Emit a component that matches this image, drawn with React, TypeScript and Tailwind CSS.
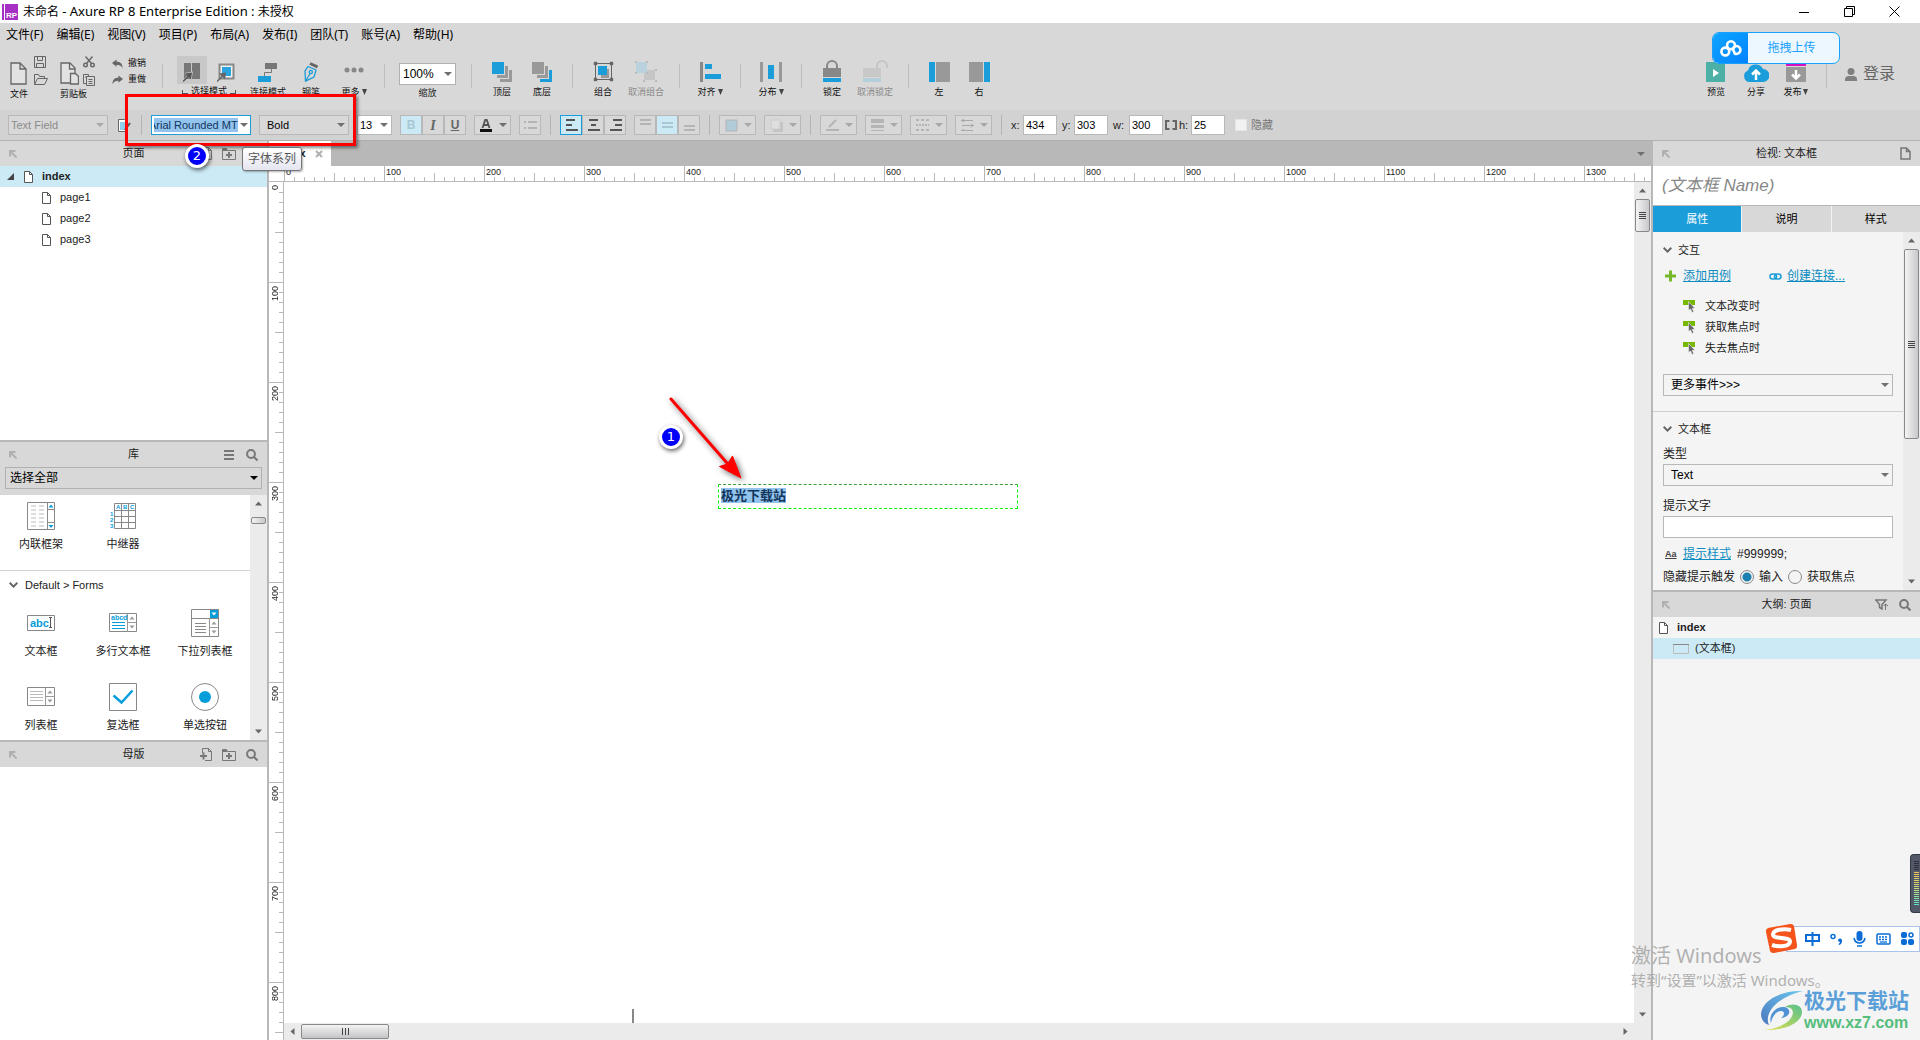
import React, { useEffect, useRef, useState } from "react";

const menus = ["文件(F)", "编辑(E)", "视图(V)", "项目(P)", "布局(A)", "发布(I)", "团队(T)", "账号(A)", "帮助(H)"];
const pages = ["page1", "page2", "page3"];
const events = ["文本改变时", "获取焦点时", "失去焦点时"];

/* ---------- shared bits ---------- */

function Sep() {
  return <div className="w-px h-6 mx-[10px] mt-2 shrink-0 bg-[#bcbcbc]" />;
}

function FormatSep() {
  return <div className="w-px h-5 mx-px shrink-0 bg-[#b4b4b4]" />;
}

function Caret({ className = "text-[#707070]" }: { className?: string }) {
  return (
    <svg width="8" height="4" viewBox="0 0 8 4" className={`shrink-0 ${className}`}>
      <path d="M0 0h8L4 4z" fill="currentColor" />
    </svg>
  );
}

type PickProps = {
  label: string;
  options: string[];
  className: string;
  caret?: string;
};

function Pick({ label, options, className, caret }: PickProps) {
  return (
    <div className={`relative flex items-center border ${className}`}>
      <select
        aria-label={label}
        className="appearance-none w-full h-full pr-3 bg-transparent outline-none"
      >
        {options.map((option) => (
          <option key={option}>{option}</option>
        ))}
      </select>
      <div className="absolute right-[3px] pointer-events-none">
        <Caret className={caret} />
      </div>
    </div>
  );
}

type ToolProps = {
  label: string;
  menu?: boolean;
  disabled?: boolean;
  wide?: boolean;
  children: React.ReactNode;
};

function Tool({ label, menu, disabled, wide, children }: ToolProps) {
  return (
    <button
      disabled={disabled}
      className={`flex flex-col items-center shrink-0 text-[9px] ${wide ? "w-[46px]" : "w-10"} ${
        disabled ? "text-[#8a8a8a]" : "text-[#111]"
      }`}
    >
      <span className="flex items-end justify-center h-7 pb-[2px]">{children}</span>
      <span className="flex items-center gap-[2px] h-4 whitespace-nowrap leading-4">
        {label}
        {menu && (
          <svg width="5" height="6" viewBox="0 0 5 6">
            <path d="M0 0h5L2.500 6z" fill="#444" />
          </svg>
        )}
      </span>
    </button>
  );
}

function DocIcon({ w = 9, h = 12 }: { w?: number; h?: number }) {
  return (
    <svg width={w} height={h} viewBox="0 0 9 12" fill="#fff" stroke="#555" className="shrink-0">
      <path d="M.5.5h5l3 3v8h-8z" />
      <path d="M5.500.5v3h3" fill="none" />
    </svg>
  );
}

function SearchIcon() {
  return (
    <svg width="12" height="12" viewBox="0 0 12 12" fill="none" stroke="#777" strokeWidth="2">
      <circle cx="5" cy="5" r="3.900" />
      <path d="M8 8l3.500 3.500" />
    </svg>
  );
}

function AddPageIcon() {
  return (
    <svg width="12" height="13" viewBox="0 0 12 13" fill="none" stroke="#777">
      <path d="M2.500 5V.5h6l3 3v9H5M8.500.5v3h3" />
      <path d="M0 8h7M3.500 4.500v7" strokeWidth="2" />
    </svg>
  );
}

function AddFolderIcon() {
  return (
    <svg width="14" height="12" viewBox="0 0 14 12" fill="none" stroke="#777">
      <path d="M.5 11.500V.5h4l1 2h8v9z" />
      <path d="M1 1h4v2H1z" fill="#777" stroke="none" />
      <path d="M4 7h6M7 4v6" strokeWidth="2" />
    </svg>
  );
}

function Chevron() {
  return (
    <svg width="9" height="6" viewBox="0 0 9 6" fill="none" stroke="#666" strokeWidth="2" className="shrink-0">
      <path d="M.7.8l3.800 3.800L8.300.8" />
    </svg>
  );
}

function PanelHeader({ title, children }: { title: string; children?: React.ReactNode }) {
  return (
    <div className="grid grid-cols-[1fr_auto_1fr] items-center h-[25px] px-[9px] shrink-0 bg-[#d8d8d8]">
      <svg width="8" height="8" viewBox="0 0 8 8" fill="none" stroke="#b0b0b0" strokeWidth="2">
        <path d="M1 6.500V1h5.500M1 1l6.500 6.500" />
      </svg>
      <h2 className="text-[11px]">{title}</h2>
      <div className="flex items-center justify-end gap-[10px]">{children}</div>
    </div>
  );
}

function ScrollArrow({ dir }: { dir: "up" | "down" | "left" | "right" }) {
  const paths = {
    up: "M0 5.500L3.500 1.500 7 5.500z",
    down: "M0 1.500h7L3.500 5.500z",
    left: "M5.500 0v7L1.500 3.500z",
    right: "M1.500 0v7l4-3.500z",
  };
  return (
    <span className="flex items-center justify-center w-[17px] h-[17px] shrink-0">
      <svg width="7" height="7" viewBox="0 0 7 7">
        <path d={paths[dir]} fill="#666" />
      </svg>
    </span>
  );
}

function VScroll({ thumb, grip = true }: { thumb: string; grip?: boolean }) {
  return (
    <div className="flex flex-col items-center w-[17px] shrink-0 bg-[#ebebeb]">
      <ScrollArrow dir="up" />
      <div
        className={`flex flex-col items-center justify-center gap-px w-[15px] shrink-0 border border-[#888] rounded-[2px] bg-linear-to-r from-[#f4f4f4] to-[#c8c8cc] ${thumb}`}
      >
        {grip && [0, 1, 2, 3].map((n) => <div key={n} className="w-[7px] h-px bg-[#444]" />)}
      </div>
      <div className="flex-1" />
      <ScrollArrow dir="down" />
    </div>
  );
}

/* ---------- top bars ---------- */

function TitleBar() {
  return (
    <header className="flex items-center h-[23px] shrink-0 bg-white font-['Noto_Sans','Noto_Sans_CJK_SC',sans-serif] text-black">
      <svg width="16" height="16" viewBox="0 0 16 16" className="ml-[2px] shrink-0">
        <path d="M0 0h16v16H0z" fill="#a62fc4" />
        <path d="M2 0h1v16H2z" fill="#fff" />
        <text x="4" y="14" fontSize="8" fontFamily="Liberation Sans" fontWeight="bold" fill="#fff">
          RP
        </text>
      </svg>
      <h1 className="ml-[5px] text-[12px] leading-[18px]">
        未命名 <span className="text-[13px]">- Axure RP 8 Enterprise Edition :</span> 未授权
      </h1>
      <div className="flex items-center gap-[34px] ml-auto mr-5">
        <button aria-label="最小化">
          <svg width="11" height="11" viewBox="0 0 11 11" stroke="#000">
            <path d="M0 6.500h10" />
          </svg>
        </button>
        <button aria-label="还原">
          <svg width="11" height="11" viewBox="0 0 11 11" fill="none" stroke="#000">
            <path d="M.5 2.500h8v8h-8zM2.500 2.500v-2h8v8h-2" />
          </svg>
        </button>
        <button aria-label="关闭">
          <svg width="11" height="11" viewBox="0 0 11 11" stroke="#000">
            <path d="M.5.5l10 10M10.500.5l-10 10" />
          </svg>
        </button>
      </div>
    </header>
  );
}

function MenuBar() {
  return (
    <nav className="flex items-center gap-[13px] h-[23px] pl-[6px] shrink-0 bg-[#d8d8d8] font-['Noto_Sans','Noto_Sans_CJK_SC',sans-serif] text-[12px] text-black">
      {menus.map((menu) => (
        <button key={menu}>{menu}</button>
      ))}
    </nav>
  );
}

function FileTools() {
  return (
    <div className="flex pl-[10px] text-[9px] text-[#111]">
      <div className="flex flex-col w-[50px]">
        <div className="flex gap-[7px] h-[30px]">
          <button aria-label="新建" className="mt-1">
            <svg width="17" height="23" viewBox="0 0 17 23" fill="#e2e2e2" stroke="#666" strokeWidth="1.300">
              <path d="M1 1h9l6 6v15H1zM10 1v6h6" />
            </svg>
          </button>
          <div className="flex flex-col gap-[6px]">
            <button aria-label="保存">
              <svg width="12" height="12" viewBox="0 0 12 12" fill="none" stroke="#666">
                <path d="M.5.500h11v11H.5zM3.500.5v4h5v-4M2.500 11.500v-4h7v4" />
              </svg>
            </button>
            <button aria-label="打开">
              <svg width="14" height="11" viewBox="0 0 14 11" fill="none" stroke="#666">
                <path d="M.5 10.500V.5h4l1 2h5v2M.5 10.500l3-6h10l-3 6z" />
              </svg>
            </button>
          </div>
        </div>
        <span className="leading-4">文件</span>
      </div>
      <div className="flex flex-col w-[52px]">
        <div className="flex gap-[4px] h-[30px]">
          <button aria-label="粘贴" className="mt-1">
            <svg width="19" height="23" viewBox="0 0 19 23" fill="#e2e2e2" stroke="#666" strokeWidth="1.300">
              <path d="M1 1h9l5 5v15H1z" />
              <path d="M10.500 11.500h5l3 3v7.500h-8z" />
              <path d="M9.500 1v6H15" fill="none" />
            </svg>
          </button>
          <div className="flex flex-col gap-[6px]">
            <button aria-label="剪切">
              <svg width="12" height="12" viewBox="0 0 12 12" fill="none" stroke="#666" strokeWidth="1.400">
                <circle cx="2.500" cy="9" r="1.800" />
                <circle cx="9.500" cy="9" r="1.800" />
                <path d="M3.500 7.500L9.500.5M8.500 7.500L2.500.5" />
              </svg>
            </button>
            <button aria-label="复制">
              <svg width="12" height="12" viewBox="0 0 12 12" fill="none" stroke="#666">
                <path d="M3.500 9.500h-3v-9h5v2M3.500 2.500h8v9h-8zM5.500 5.500h4M5.500 7.500h4M5.500 9.500h4M2 3h2" />
              </svg>
            </button>
          </div>
        </div>
        <span className="leading-4">剪贴板</span>
      </div>
      <div className="flex flex-col w-[40px]">
        <button className="flex items-center gap-[5px] h-4 whitespace-nowrap">
          <svg width="11" height="10" viewBox="0 0 12 10" fill="#666">
            <path d="M0 4l5-4v2.500c4 0 6.500 2 6.500 7C10 6.500 8 5.700 5 5.700V8z" />
          </svg>
          撤销
        </button>
        <button className="flex items-center gap-[5px] h-4 whitespace-nowrap">
          <svg width="11" height="10" viewBox="0 0 12 10" fill="#666">
            <path d="M12 4L7 0v2.500C3 2.500.5 4.500.5 9.500 2 6.500 4 5.700 7 5.700V8z" />
          </svg>
          重做
        </button>
      </div>
    </div>
  );
}

function SelectMode() {
  return (
    <div className="flex flex-col w-[71px] ml-1 text-[9px] text-[#111]">
      <div className="flex gap-1">
        <button aria-label="相交选择" className="flex items-end justify-center w-[30px] h-7 pb-[2px] bg-[#c8c8c8]">
          <svg width="18" height="20" viewBox="0 0 18 20">
            <path d="M1 1h7v16H1zM9 1h8v16H9z" fill="#777" />
            <path d="M0 19l6-6M3 11.500l6-1-1 6z" stroke="#ccc" strokeWidth="1.500" fill="#ccc" />
            <path d="M0 19.500l6-6" stroke="#555" strokeWidth="1.500" />
            <path d="M2 11.500l7-1-1 7z" fill="#555" />
          </svg>
        </button>
        <button aria-label="包含选择" className="flex items-end justify-center w-[30px] h-7 pb-[2px]">
          <svg width="18" height="20" viewBox="0 0 18 20">
            <path d="M2.500 2.500h14v14h-14z" fill="#f2f2f2" stroke="#888" strokeWidth="2" />
            <path d="M5 5h9v9H5z" fill="#2aa4dc" />
            <path d="M0 19.500l6-6" stroke="#666" strokeWidth="1.500" />
            <path d="M2 11.500l7-1-1 7z" fill="#666" />
          </svg>
        </button>
      </div>
      <div className="flex items-center gap-[3px] pl-[5px] h-4 whitespace-nowrap">
        <span className="w-[6px] h-1 border-l border-b border-[#555]" />
        选择模式
        <span className="w-[6px] h-1 border-r border-b border-[#555]" />
      </div>
    </div>
  );
}

function Layers({ top, rest }: { top: string; rest: string }) {
  return (
    <svg width="20" height="20" viewBox="0 0 20 20">
      <path d="M17 8h3v12H8v-3h9z" fill={rest} />
      <path d="M13 4h3v12H5v-3h8z" fill="#999" />
      <path d="M0 0h12v12H0z" fill={top} />
    </svg>
  );
}

function Toolbar() {
  return (
    <div className="flex items-start h-16 pt-[10px] shrink-0 bg-[#d8d8d8]">
      <FileTools />
      <Sep />
      <SelectMode />
      <Tool label="连接模式">
        <svg width="20" height="20" viewBox="0 0 20 20">
          <path d="M7 1h12v6H7z" fill="#777" />
          <path d="M13.500 7v3.500h-7V14" fill="none" stroke="#777" />
          <path d="M0 14h13v6H0z" fill="#1b9dd9" />
        </svg>
      </Tool>
      <Tool wide label="钢笔">
        <svg width="14" height="20" viewBox="0 0 14 20" fill="none" stroke="#1b9dd9" strokeWidth="1.300">
          <path d="M4 4.500l8 3.500-2 7-8.500 4.200L1 9z" />
          <circle cx="6.800" cy="10" r="1.600" />
          <path d="M1.500 19l4.700-7.500" />
          <path d="M6 1.500l7.500 3.500" stroke="#666" strokeWidth="3" />
        </svg>
      </Tool>
      <Tool menu label="更多">
        <svg width="20" height="15" viewBox="0 0 20 15" fill="#888">
          <circle cx="3" cy="3" r="2.500" />
          <circle cx="10" cy="3" r="2.500" />
          <circle cx="17" cy="3" r="2.500" />
        </svg>
      </Tool>
      <Sep />
      <div className="flex flex-col items-center pt-[7px] pl-1 pr-[5px] text-[9px]">
        <Pick
          label="缩放"
          options={["100%"]}
          className="w-[57px] h-[22px] pl-[3px] border-[#b0b0b0] bg-white text-[12px] text-black"
        />
        <span className="leading-4">缩放</span>
      </div>
      <Sep />
      <Tool label="顶层">
        <Layers top="#1b9dd9" rest="#999" />
      </Tool>
      <Tool label="底层">
        <Layers top="#999" rest="#1b9dd9" />
      </Tool>
      <Sep />
      <Tool label="组合">
        <svg width="21" height="21" viewBox="0 0 21 21">
          <path d="M8 8h8v9H8z" fill="#999" />
          <path d="M5 5h9v9H5z" fill="#1b9dd9" />
          <path d="M2.500 2.500h16v16h-16z" fill="none" stroke="#666" />
          <path d="M1.500 1.500h2v2h-2zM17.500 1.500h2v2h-2zM1.500 17.500h2v2h-2zM17.500 17.500h2v2h-2z" fill="#666" stroke="#666" strokeWidth="1.500" strokeLinejoin="round" />
        </svg>
      </Tool>
      <Tool wide disabled label="取消组合">
        <svg width="22" height="21" viewBox="0 0 22 21">
          <path d="M9 9h11v10H9z" fill="#c6c6c6" />
          <path d="M1 1h11v11H1z" fill="#b9d2de" />
          <path d="M0 0h2v2H0zM11 0h2v2h-2zM0 11h2v2H0zM20 8h2v2h-2zM8 19h2v2H8zM20 19h2v2h-2zM11 11h2v2h-2z" fill="#bbb" />
        </svg>
      </Tool>
      <Sep />
      <Tool menu label="对齐">
        <svg width="21" height="20" viewBox="0 0 21 20">
          <path d="M0 0h3v20H0z" fill="#888" />
          <path d="M5 2h7v5H5zM5 12h16v5H5z" fill="#1b9dd9" />
        </svg>
      </Tool>
      <Sep />
      <Tool menu label="分布">
        <svg width="22" height="20" viewBox="0 0 22 20">
          <path d="M0 0h3v20H0zM19 0h3v20h-3z" fill="#999" />
          <path d="M8 3h6v14H8z" fill="#1b9dd9" />
        </svg>
      </Tool>
      <Sep />
      <Tool label="锁定">
        <svg width="18" height="22" viewBox="0 0 18 22">
          <path d="M4 9V6a5 5 0 0110 0v3" fill="none" stroke="#888" strokeWidth="2" />
          <path d="M0 8h18v9H0z" fill="#888" />
          <path d="M0 18h18v4H0z" fill="#1b9dd9" />
        </svg>
      </Tool>
      <Tool wide disabled label="取消锁定">
        <svg width="25" height="22" viewBox="0 0 25 22">
          <path d="M14 9V6a5 5 0 0110 0v2" fill="none" stroke="#c4c4c4" strokeWidth="2" />
          <path d="M0 8h18v9H0z" fill="#c8c8c8" />
          <path d="M0 18h18v4H0z" fill="#b3cfdc" />
        </svg>
      </Tool>
      <Sep />
      <Tool label="左">
        <svg width="21" height="20" viewBox="0 0 21 20">
          <path d="M0 0h6v20H0z" fill="#1b9dd9" />
          <path d="M7 0h14v20H7z" fill="#999" />
        </svg>
      </Tool>
      <Tool label="右">
        <svg width="21" height="20" viewBox="0 0 21 20">
          <path d="M15 0h6v20h-6z" fill="#1b9dd9" />
          <path d="M0 0h14v20H0z" fill="#999" />
        </svg>
      </Tool>
      <div className="flex ml-auto pr-[25px]">
        <Tool label="预览">
          <svg width="19" height="20" viewBox="0 0 19 20">
            <path d="M0 0h19v20H0z" fill="#4db0a6" />
            <path d="M7 7l6 4-6 4z" fill="#fff" />
          </svg>
        </Tool>
        <Tool label="分享">
          <svg width="26" height="19" viewBox="0 0 26 19">
            <path d="M6 19a6 6 0 01-1-11.500A8 8 0 0120 6a6.500 6.500 0 010 13z" fill="#1b9dd9" />
            <path d="M13 17V8M9 11.500L13 7.500l4 4" fill="none" stroke="#fff" strokeWidth="2.500" />
          </svg>
        </Tool>
        <Tool menu label="发布">
          <svg width="20" height="20" viewBox="0 0 20 20">
            <path d="M0 0h20v4H0z" fill="#d60fc0" />
            <path d="M0 5h20v15H0z" fill="#999" />
            <path d="M10 8v8M6 12.500l4 4 4-4" fill="none" stroke="#fff" strokeWidth="2.500" />
          </svg>
        </Tool>
        <Sep />
        <button className="flex items-center gap-[6px] h-9 pl-2 text-[16px] text-[#666]">
          <svg width="12" height="13" viewBox="0 0 12 13" fill="#808080">
            <circle cx="6" cy="3.500" r="3.500" />
            <path d="M0 13v-2c0-2 2-3 3.500-3h5C10 8 12 9 12 11v2z" />
          </svg>
          登录
        </button>
      </div>
    </div>
  );
}

function DropTool({ label, off, children }: { label: string; off?: boolean; children: React.ReactNode }) {
  return (
    <button
      aria-label={label}
      disabled={off}
      className="flex items-center justify-between w-[37px] h-5 pl-[5px] pr-[3px] shrink-0 border border-[#b8b8b8] bg-[#d8d8d8]"
    >
      {children}
      <Caret className={off ? "text-[#a8a8a8]" : "text-[#707070]"} />
    </button>
  );
}

function Cell({ label, active, children }: { label: string; active?: string; children: React.ReactNode }) {
  return (
    <button
      aria-label={label}
      className={`flex items-center justify-center w-[22px] h-5 border text-[12px] font-bold ${
        active ?? "border-[#b8b8b8] bg-[#d8d8d8] text-[#666]"
      }`}
    >
      {children}
    </button>
  );
}

function Glyph({ d, stroke = "#555", width = 2 }: { d: string; stroke?: string; width?: number }) {
  return (
    <svg width="13" height="12" viewBox="0 0 13 12" fill="none" stroke={stroke} strokeWidth={width}>
      <path d={d} />
    </svg>
  );
}

function NumField({ label, value }: { label: string; value: string }) {
  return (
    <label className="flex items-center">
      <span className={label === "w:" ? "w-4" : "w-3"}>{label}</span>
      <input defaultValue={value} className="w-[34px] h-5 pl-[2px] border border-[#b8b8b8] bg-white text-black outline-none" />
    </label>
  );
}

function FormatBar() {
  const fontRef = useRef<HTMLInputElement>(null);

  // font family starts out selected, like after a click in the combo
  useEffect(() => {
    fontRef.current?.focus();
    fontRef.current?.select();
  }, []);

  return (
    <div className="flex items-center gap-2 h-[30px] pl-2 shrink-0 bg-[#d2d2d2] text-[11px] text-[#222]">
      <Pick
        label="部件样式"
        options={["Text Field"]}
        className="w-[100px] h-5 pl-[2px] shrink-0 border-[#b8b8b8] bg-[#d8d8d8] text-[#8a8a8a]"
        caret="text-[#a8a8a8]"
      />
      <button aria-label="管理样式" className="w-4">
        <svg width="15" height="13" viewBox="0 0 15 13">
          <path d="M2.500.5h6l3 3v9h-9z" fill="#fff" stroke="#666" />
          <path d="M4 4h5M4 6h6M4 8h6M4 10h5" stroke="#1b9dd9" />
          <path d="M9 11l5-7" stroke="#555" strokeWidth="2" />
        </svg>
      </button>
      <FormatSep />
      <div className="flex items-center justify-between w-[100px] h-5 pl-[2px] pr-[2px] shrink-0 border border-[#1b9dd9] bg-white">
        <input
          ref={fontRef}
          aria-label="字体系列"
          defaultValue="Arial Rounded MT"
          className="w-[84px] h-[14px] outline-none text-[#12355c] selection:bg-[#92c4ee] selection:text-[#12355c]"
        />
        <Caret />
      </div>
      <Pick
        label="字体样式"
        options={["Bold"]}
        className="w-[90px] h-5 pl-[7px] shrink-0 border-[#b8b8b8] bg-[#d8d8d8] text-black"
      />
      <Pick
        label="字号"
        options={["13"]}
        className="w-[35px] h-5 pl-[2px] shrink-0 border-[#b8b8b8] bg-white text-black"
      />
      <div className="flex">
        <Cell label="粗体" active="border-[#b8b8b8] bg-[#cbeaf6] text-[#a9c6d2]">
          B
        </Cell>
        <Cell label="斜体">
          <span className="italic font-['Liberation_Serif',serif] text-[14px]">I</span>
        </Cell>
        <Cell label="下划线">
          <span className="underline">U</span>
        </Cell>
      </div>
      <DropTool label="文字颜色">
        <svg width="12" height="13" viewBox="0 0 12 13">
          <path d="M2.500 9L5.200 1h1.600L9.500 9M3.700 6h4.600" fill="none" stroke="#555" strokeWidth="1.800" />
          <path d="M0 10h12v3H0z" fill="#111" />
        </svg>
      </DropTool>
      <Cell label="项目符号">
        <Glyph stroke="#b4b4b4" d="M0 3h2M4 3h9M0 9h2M4 9h9" />
      </Cell>
      <FormatSep />
      <div className="flex">
        <Cell label="左对齐" active="border-[#1b9dd9] bg-[#cbeaf6]">
          <Glyph d="M1 1h9M1 6h6M1 11h12" />
        </Cell>
        <Cell label="居中">
          <Glyph d="M2 1h9M4 6h5M1 11h12" />
        </Cell>
        <Cell label="右对齐">
          <Glyph d="M4 1h9M6 6h7M1 11h12" />
        </Cell>
      </div>
      <div className="flex">
        <Cell label="顶部">
          <Glyph stroke="#b4b4b4" d="M1 1h11M1 5h11" />
        </Cell>
        <Cell label="中部" active="border-[#b8b8b8] bg-[#cbeaf6]">
          <Glyph stroke="#a9c6d2" d="M1 4h11M1 8h11" />
        </Cell>
        <Cell label="底部">
          <Glyph stroke="#b4b4b4" d="M1 7h11M1 11h11" />
        </Cell>
      </div>
      <FormatSep />
      <DropTool off label="填充颜色">
        <svg width="13" height="13" viewBox="0 0 13 13">
          <path d="M1 1h11v11H1z" fill="#b1cbd8" stroke="#b4b4b4" />
        </svg>
      </DropTool>
      <DropTool off label="外部阴影">
        <svg width="13" height="13" viewBox="0 0 13 13">
          <path d="M3 3h10v10H3z" fill="#c4c4c4" />
          <path d="M1 1h9v9H1z" fill="#dedede" stroke="#ccc" />
        </svg>
      </DropTool>
      <FormatSep />
      <DropTool off label="线段颜色">
        <Glyph stroke="#b4b4b4" d="M3 8l7-7M0 11h13" />
      </DropTool>
      <DropTool off label="线宽">
        <svg width="13" height="12" viewBox="0 0 13 12" fill="#b4b4b4">
          <path d="M0 0h13v4H0zM0 6h13v3H0zM0 11h13v1H0z" />
        </svg>
      </DropTool>
      <DropTool off label="线段类型">
        <svg width="13" height="12" viewBox="0 0 13 12" stroke="#b4b4b4" strokeWidth="2">
          <path d="M0 1h13" strokeDasharray="3 2" />
          <path d="M0 6h13" strokeDasharray="2 1" />
          <path d="M0 11h13" strokeDasharray="3 2" />
        </svg>
      </DropTool>
      <DropTool off label="箭头样式">
        <Glyph width={1} stroke="#a8a8a8" d="M0 1.500h12M3 0L1 1.500 3 3M1 6.500h12M10 4.500l2 2-2 2M0 11.500h12M3 10l-2 1.500" />
      </DropTool>
      <FormatSep />
      <div className="flex items-center gap-[5px]">
        <NumField label="x:" value="434" />
        <NumField label="y:" value="303" />
        <div className="flex items-center gap-[2px]">
          <NumField label="w:" value="300" />
          <button aria-label="保持宽高比例">
            <svg width="12" height="10" viewBox="0 0 12 10" fill="none" stroke="#666" strokeWidth="2">
              <path d="M4.500 1H1v8h3.500M7.500 1H11v8H7.500" />
            </svg>
          </button>
          <NumField label="h:" value="25" />
        </div>
      </div>
      <label className="flex items-center gap-1 pl-[2px] text-[#777]">
        <input type="checkbox" className="appearance-none w-3 h-3 border border-[#e4e4e4] bg-[#f2f2f2]" />
        隐藏
      </label>
    </div>
  );
}

/* ---------- left column ---------- */

function PagesPanel() {
  return (
    <section className="flex flex-col h-[299px] bg-white">
      <PanelHeader title="页面">
        <AddPageIcon />
        <AddFolderIcon />
        <SearchIcon />
      </PanelHeader>
      <ul className="text-[11px] text-[#222]">
        <li className="flex items-center h-[21px] pl-[7px] bg-[#cbeaf6] font-bold">
          <svg width="7" height="7" viewBox="0 0 7 7" className="mr-[10px]">
            <path d="M7 0v7H0z" fill="#444" />
          </svg>
          <DocIcon />
          <span className="pl-[9px]">index</span>
        </li>
        {pages.map((page) => (
          <li key={page} className="flex items-center gap-[9px] h-[21px] pl-[42px]">
            <DocIcon />
            {page}
          </li>
        ))}
      </ul>
    </section>
  );
}

function UpDown({ x, y, h, color = "#999" }: { x: number; y: number; h: number; color?: string }) {
  const mid = y + h / 2;
  return (
    <g>
      <path d={`M${x + 2} ${mid - 3}h5l-2.500-3zM${x + 2} ${mid + 3}h5l-2.500 3z`} fill={color} />
      <path d={`M${x} ${y}v${h}M${x} ${mid}h9`} stroke="#999" fill="none" />
    </g>
  );
}

function LibItem({ name, children }: { name: string; children: React.ReactNode }) {
  return (
    <div className="flex flex-col items-center gap-[5px]">
      <svg width="28" height="28" viewBox="0 0 28 28" fill="none">
        {children}
      </svg>
      <span className="h-[18px] leading-[18px] text-[11px]">{name}</span>
    </div>
  );
}

function LibraryPanel() {
  return (
    <section className="flex flex-col border-t-2 border-[#b8b8b8] bg-white text-[#222]">
      <PanelHeader title="库">
        <svg width="10" height="10" viewBox="0 0 10 10" stroke="#777" strokeWidth="2">
          <path d="M0 1h10M0 5h10M0 9h10" />
        </svg>
        <span className="pl-[2px]">
          <SearchIcon />
        </span>
      </PanelHeader>
      <div className="px-[5px] pb-[6px] bg-[#d8d8d8]">
        <Pick
          label="选择库"
          options={["选择全部"]}
          className="h-[22px] pl-1 border-[#b0b0b0] text-[12px] text-black"
          caret="text-black"
        />
      </div>
      <div className="flex h-[245px]">
        <div className="flex-1">
          <div className="grid grid-cols-3 h-[76px] pt-[7px] pr-1 border-b border-[#d0d0d0]">
            <LibItem name="内联框架">
              <path d="M.5.5h27v27H.5zM20.500.5v27M20.500 7.500h7M20.500 20.500h7" stroke="#888" />
              <path d="M4 4h5M12 4h5M4 8h5M12 8h5M4 12h5M12 12h5M4 16h5M12 16h5M4 20h5M12 20h5M4 24h5M12 24h5" stroke="#bbb" />
              <path d="M21.500 5.500h5l-2.500-3zM21.500 23h5l-2.500 3z" fill="#069ddb" />
            </LibItem>
            <LibItem name="中继器">
              <path d="M5.500 1.500h21v25h-21zM5.500 8.500h21M5.500 14.500h21M5.500 20.500h21M12.500 1.500v25M19.500 1.500v25" stroke="#888" />
              <g fontSize="6" fontWeight="bold" fontFamily="Liberation Sans" fill="#069ddb">
                <text x="7" y="7">A</text>
                <text x="14" y="7">B</text>
                <text x="21" y="7">C</text>
                <text x="1" y="14">1</text>
                <text x="1" y="20">2</text>
                <text x="1" y="26">3</text>
              </g>
            </LibItem>
          </div>
          <div className="flex items-center gap-[7px] h-7 pl-[9px] text-[11px]">
            <Chevron />
            Default &gt; Forms
          </div>
          <div className="grid grid-cols-3 gap-y-[23px] pt-[10px] pr-1">
            <LibItem name="文本框">
              <path d="M.5 6.500h27v15H.5z" stroke="#888" />
              <text x="3" y="18" fontSize="11" fontWeight="bold" fontFamily="Liberation Sans" fill="#069ddb">
                abc
              </text>
              <path d="M22 8.500h3M23.500 8.500v10M22 18.500h3" stroke="#555" />
            </LibItem>
            <LibItem name="多行文本框">
              <path d="M.5 4.500h27v18H.5z" stroke="#888" />
              <UpDown x={18.5} y={4.5} h={18} />
              <text x="2" y="11" fontSize="7" fontWeight="bold" fontFamily="Liberation Sans" fill="#069ddb">
                abcd
              </text>
              <path d="M3 13.500h13M3 16.500h13M3 19.500h13" stroke="#069ddb" />
            </LibItem>
            <LibItem name="下拉列表框">
              <path d="M.5.5h27v27H.5zM.5 9.500h27" stroke="#888" />
              <path d="M19 1h8v8h-8z" fill="#069ddb" />
              <path d="M20.500 3.500h5l-2.500 3z" fill="#fff" />
              <UpDown x={18.5} y={9.5} h={18} />
              <path d="M4 14.500h11M4 17.500h11M4 20.500h11M4 23.500h11" stroke="#888" />
            </LibItem>
            <LibItem name="列表框">
              <path d="M.5 4.500h27v18H.5z" stroke="#888" />
              <UpDown x={18.5} y={4.5} h={18} />
              <path d="M3 8.500h13M3 11.500h13M3 14.500h13M3 17.500h13" stroke="#bbb" />
            </LibItem>
            <LibItem name="复选框">
              <path d="M.5.5h27v27H.5z" stroke="#888" />
              <path d="M4.500 12.500l8 7 11-12" stroke="#069ddb" strokeWidth="2.500" />
            </LibItem>
            <LibItem name="单选按钮">
              <circle cx="14" cy="14" r="13.500" stroke="#888" />
              <circle cx="14" cy="14" r="6" fill="#069ddb" />
            </LibItem>
          </div>
        </div>
        <VScroll thumb="h-[7px] mt-[5px]" grip={false} />
      </div>
    </section>
  );
}

/* ---------- canvas ---------- */

function RulerX() {
  return (
    <div className="flex h-4 pl-[15px] shrink-0 overflow-hidden border-b border-[#b8b8b8] bg-white text-[9px] text-[#222]">
      {Array.from({ length: 14 }, (_, i) => (
        <div key={i} className="flex items-end w-[100px] h-full shrink-0">
          <div className="w-[10px] h-full pl-px border-l border-[#b8b8b8] leading-3 whitespace-nowrap">{i * 100}</div>
          {[1, 2, 3, 4, 5, 6, 7, 8, 9].map((n) => (
            <div key={n} className={`w-[10px] border-l border-[#b8b8b8] ${n === 5 ? "h-2" : "h-1"}`} />
          ))}
        </div>
      ))}
    </div>
  );
}

function RulerY() {
  return (
    <div className="flex flex-col w-[15px] shrink-0 overflow-hidden border-r border-[#b8b8b8] bg-white text-[9px] text-[#222]">
      {Array.from({ length: 9 }, (_, i) => (
        <div key={i} className="flex flex-col items-end w-full h-[100px] shrink-0">
          <div className={`flex items-start w-full h-[10px] pt-[3px] pl-px ${i > 0 ? "border-t border-[#b8b8b8]" : ""}`}>
            <span className="rotate-180 leading-[10px] [writing-mode:vertical-rl]">{i * 100}</span>
          </div>
          {[1, 2, 3, 4, 5, 6, 7, 8, 9].map((n) => (
            <div key={n} className={`h-[10px] border-t border-[#b8b8b8] ${n === 5 ? "w-2" : "w-1"}`} />
          ))}
        </div>
      ))}
    </div>
  );
}

function Marker({ n }: { n: number }) {
  return (
    <div className="flex items-center justify-center w-6 h-6 rounded-full border-[3px] border-white bg-[#0000fa] text-white text-[13px] font-['DejaVu_Sans',sans-serif] shadow-[1px_2px_4px_rgba(0,0,0,0.6)]">
      {n}
    </div>
  );
}

function Canvas() {
  return (
    <main className="flex flex-col flex-1 min-w-0 border-x-2 border-[#b8b8b8] bg-white">
      <div className="flex items-center justify-between h-[25px] pr-[6px] shrink-0 bg-[#b8b8b8]">
        <div className="flex items-center gap-[9px] h-full px-2 bg-white text-[11px] font-bold text-[#222]">
          index
          <button aria-label="关闭标签" className="text-[#b0b0b0]">
            <svg width="8" height="8" viewBox="0 0 8 8" stroke="currentColor" strokeWidth="2">
              <path d="M1 1l6 6M7 1L1 7" />
            </svg>
          </button>
        </div>
        <Caret />
      </div>
      <RulerX />
      <div className="flex flex-1 min-h-0">
        <RulerY />
        <div className="flex flex-col flex-1 min-w-0">
          <div className="relative flex-1 overflow-hidden">
            {/* widgets sit at their own canvas coordinates */}
            <div className="absolute left-[434px] top-[302px] flex items-center w-[300px] h-[25px] pl-[2px] pb-[2px] border border-dashed border-[#00f000] border-t-[#3f9f3f]">
              <span className="bg-[#92c4ee] text-[13px] leading-[15px] font-bold text-[#12355c]">极光下载站</span>
            </div>
            <svg width="90" height="95" viewBox="0 0 90 95" className="absolute left-[381px] top-[211px] drop-shadow-[2px_2px_3px_rgba(0,0,0,0.6)]">
              <path d="M6 6l56 64" stroke="#f00" strokeWidth="3" strokeLinecap="round" />
              <path d="M76 85L54.500 73.500l8-2.500 5-8z" fill="#f00" stroke="#f00" />
            </svg>
            <div className="absolute left-[375px] top-[243px]">
              <Marker n={1} />
            </div>
            <div className="absolute left-[348px] bottom-0 w-[2px] h-[14px] bg-[#888]" />
          </div>
          <div className="flex items-center h-[17px] shrink-0 bg-[#ebebeb]">
            <ScrollArrow dir="left" />
            <div className="flex items-center justify-center gap-[2px] w-[88px] h-[15px] border border-[#888] rounded-[2px] bg-linear-to-b from-[#f4f4f4] to-[#c4c4c8]">
              {[0, 1, 2].map((n) => (
                <div key={n} className="w-px h-[7px] bg-[#444]" />
              ))}
            </div>
            <div className="flex-1" />
            <ScrollArrow dir="right" />
          </div>
        </div>
        <div className="flex pb-[17px] bg-[#ebebeb]">
          <VScroll thumb="h-[33px]" />
        </div>
      </div>
    </main>
  );
}

/* ---------- right column ---------- */

function Inspector() {
  const [tab, setTab] = useState("属性");
  const [trigger, setTrigger] = useState("输入");

  return (
    <section className="flex flex-col bg-[#f4f4f4] text-[12px] text-[#222]">
      <PanelHeader title="检视: 文本框">
        <svg width="11" height="13" viewBox="0 0 11 13" fill="none" stroke="#777" strokeWidth="1.500">
          <path d="M1 1h5.500L10 4.500V12H1zM6.500 1v3.500H10" />
        </svg>
      </PanelHeader>
      <input
        aria-label="部件名称"
        placeholder="(文本框 Name)"
        className="h-10 px-[9px] border-b border-[#b8b8b8] bg-white text-[17px] italic outline-none placeholder:text-[#888]"
      />
      <div className="grid grid-cols-3 gap-px h-[26px] bg-[#f4f4f4] text-[11px]">
        {["属性", "说明", "样式"].map((name) => (
          <button
            key={name}
            onClick={() => setTab(name)}
            className={tab === name ? "bg-[#1b9dd9] text-white" : "bg-[#d8d8d8] text-black"}
          >
            {name}
          </button>
        ))}
      </div>
      <div className="flex">
        <div className="flex-1 min-w-0 pt-2 pb-[3px]">
          <div className="px-[10px] pb-[15px] border-b border-[#d0d0d0]">
            <h3 className="flex items-center gap-[6px] h-5 text-[11px]">
              <Chevron />
              交互
            </h3>
            <div className="flex items-center h-5 mt-[6px] text-[#0b8cc0]">
              <svg width="12" height="12" viewBox="0 0 12 12" stroke="#76b82a" strokeWidth="3" className="mr-1 ml-[2px]">
                <path d="M0 6h11M5.500.5v11" />
              </svg>
              <a href="#case" className="ml-[2px] w-[86px] underline">
                添加用例
              </a>
              <svg width="13" height="7" viewBox="0 0 13 7" fill="none" stroke="#1b9dd9" strokeWidth="1.500">
                <rect x="1" y="1" width="6.500" height="5" rx="2.500" />
                <rect x="5.500" y="1" width="6.500" height="5" rx="2.500" />
              </svg>
              <a href="#link" className="ml-[5px] underline">
                创建连接...
              </a>
            </div>
            <ul className="mt-[10px] pl-5 text-[11px]">
              {events.map((event) => (
                <li key={event} className="flex items-center gap-[9px] h-[21px]">
                  <svg width="13" height="14" viewBox="0 0 13 14">
                    <path d="M0 0h12v5H0z" fill="#76b900" />
                    <path
                      d="M5.500 1.500v9l2-1.500 1.500 3.500 1.700-.8L9.300 8.300h2.700z"
                      fill="#666"
                      stroke="#f4f4f4"
                      strokeWidth=".6"
                    />
                  </svg>
                  {event}
                </li>
              ))}
            </ul>
            <Pick
              label="更多事件"
              options={["更多事件>>>"]}
              className="h-[22px] mt-[15px] pl-[7px] border-[#b8b8b8] text-black"
            />
          </div>
          <div className="px-[10px] pt-[7px]">
            <h3 className="flex items-center gap-[6px] h-5 text-[11px]">
              <Chevron />
              文本框
            </h3>
            <div className="mt-[5px] h-5 leading-5">类型</div>
            <Pick label="类型" options={["Text"]} className="h-[22px] pl-[7px] border-[#b8b8b8] text-black" />
            <label className="block mt-[10px]">
              <span className="block h-5 leading-5">提示文字</span>
              <input className="block w-full h-[22px] border border-[#b8b8b8] bg-white outline-none" />
            </label>
            <div className="flex items-center h-5 mt-[6px]">
              <span className="w-5 pl-[2px] text-[9px] leading-[10px] font-bold underline text-[#444]">Aa</span>
              <a href="#hint" className="underline text-[#0b8cc0]">
                提示样式
              </a>
              <span className="pl-[6px]">#999999;</span>
            </div>
            <div className="flex items-center gap-[5px] h-5 mt-[3px] whitespace-nowrap">
              <span>隐藏提示触发</span>
              {["输入", "获取焦点"].map((name) => (
                <label key={name} className="flex items-center gap-[5px]">
                  <input
                    type="radio"
                    name="trigger"
                    checked={trigger === name}
                    onChange={() => setTrigger(name)}
                    className="appearance-none w-[14px] h-[14px] rounded-full border border-[#888] bg-[#f4f4f4] checked:bg-[radial-gradient(circle,#1b7fb0_0_4px,#f4f4f4_5px)]"
                  />
                  {name}
                </label>
              ))}
            </div>
          </div>
        </div>
        <VScroll thumb="h-[190px]" />
      </div>
    </section>
  );
}

function Outline() {
  return (
    <section className="flex flex-col flex-1 border-t-2 border-[#b8b8b8] bg-[#f4f4f4] text-[11px] text-[#222]">
      <PanelHeader title="大纲: 页面">
        <svg width="14" height="11" viewBox="0 0 14 11" fill="none" stroke="#777" strokeWidth="1.500">
          <path d="M0 1h11L7 5.500V10L4.500 8.500V5.500L1 1" />
          <path d="M10.500 11V5M8.500 7l2-2 2.500 2" strokeWidth="1" />
        </svg>
        <SearchIcon />
      </PanelHeader>
      <div className="flex items-center gap-[9px] h-[21px] pl-[6px] font-bold">
        <DocIcon />
        index
      </div>
      <div className="flex items-center gap-[6px] h-[21px] pl-5 bg-[#cbeaf6]">
        <svg width="16" height="10" viewBox="0 0 16 10" fill="none">
          <path d="M.5 1v8.500h15V1" stroke="#bbb" />
          <path d="M0 .5h16" stroke="#888" />
        </svg>
        (文本框)
      </div>
    </section>
  );
}

/* ---------- things floating over the window ---------- */

function Overlays() {
  return (
    <>
      <div className="absolute left-[125px] top-[94px] w-[231px] h-[52px] border-[3px] border-[#f00] shadow-[2px_2px_3px_rgba(0,0,0,0.45)] pointer-events-none" />
      <div className="absolute left-[185px] top-[144px]">
        <Marker n={2} />
      </div>
      <div className="absolute left-[242px] top-[147px] flex items-center h-6 px-[5px] rounded-[3px] border border-[#767676] bg-linear-to-b from-white to-[#e4e5f0] text-[12px] text-[#575757] shadow-[1px_1px_2px_rgba(0,0,0,0.3)]">
        字体系列
      </div>

      <button className="absolute right-20 top-8 flex items-stretch w-32 h-8 rounded-[7px] border border-[#18a0fb] overflow-hidden bg-[#edf7ff] text-[12px] text-[#18a0fb]">
        <span className="flex items-center justify-center w-[35px] bg-linear-to-br from-[#10a5ff] to-[#0882ff]">
          <svg width="22" height="17" viewBox="0 0 22 17" fill="none" stroke="#fff" strokeWidth="2.600">
            <circle cx="11" cy="5.200" r="3.900" />
            <circle cx="5.300" cy="11.500" r="3.900" />
            <path d="M12.800 8.700l2 4.800a3.900 3.900 0 10-2-4.800" />
          </svg>
        </span>
        <span className="flex-1 self-center pr-1">拖拽上传</span>
      </button>

      <div className="absolute left-[1631px] bottom-[50px] font-['Noto_Sans','Noto_Sans_CJK_SC',sans-serif] text-[#a8a8a8]/90 whitespace-nowrap pointer-events-none">
        <div className="text-[20px] leading-7">激活 Windows</div>
        <div className="text-[15px] leading-5">转到“设置”以激活 Windows。</div>
      </div>

      <div className="absolute right-0 top-[854px] flex flex-col items-end justify-center w-[10px] h-[59px] pr-px rounded-l-[4px] border border-r-0 border-[#333845] bg-[#525867]">
        <svg width="5" height="47" viewBox="0 0 5 47">
          <defs>
            <linearGradient id="level" x1="0" y1="0" x2="0" y2="1">
              <stop offset="0" stopColor="#f2c25a" />
              <stop offset=".5" stopColor="#c9e07e" />
              <stop offset="1" stopColor="#5be0c8" />
            </linearGradient>
          </defs>
          <path d="M0 1.500h5M0 3.500h5M0 5.500h5M0 7.500h5M0 9.500h5" stroke="#2c303a" />
          <path
            d="M0 12h5v1H0zM0 14h5v1H0zM0 16h5v1H0zM0 18h5v1H0zM0 20h5v1H0zM0 22h5v1H0zM0 24h5v1H0zM0 26h5v1H0zM0 28h5v1H0zM0 30h5v1H0zM0 32h5v1H0zM0 34h5v1H0zM0 36h5v1H0zM0 38h5v1H0zM0 40h5v1H0zM0 42h5v1H0zM0 44h5v1H0z"
            fill="url(#level)"
          />
        </svg>
      </div>

      {/* input method bar */}
      <div className="absolute right-0 top-[923px] flex items-center">
        <svg width="33" height="31" viewBox="0 0 33 31" className="relative -mr-3">
          <path d="M3 5L25 1q3-.5 4 2l3 19q.5 3-2 4L9 30q-3 .5-4-2L1 9q-.5-3 2-4z" fill="#f5541d" />
          <path d="M26 7C18 5 8 7 8 11.500c0 5 17 2 17 7 0 5-11 6-18 3.500" fill="none" stroke="#fff" strokeWidth="4" />
        </svg>
        <div className="flex items-center gap-[10px] h-[26px] pl-[18px] pr-[5px] border border-[#a9c4e8] bg-white text-[#0a6cd6]">
          <svg width="15" height="14" viewBox="0 0 15 14" fill="none" stroke="currentColor" strokeWidth="2">
            <path d="M1 3h13v6H1zM7.500 0v14" />
          </svg>
          <svg width="13" height="14" viewBox="0 0 13 14">
            <circle cx="3" cy="4.500" r="2" fill="none" stroke="currentColor" strokeWidth="1.500" />
            <path d="M8 8a2 2 0 114 1q0 3-3 4l-.5-1q1.500-1 1.500-2A2 2 0 018 8z" fill="currentColor" />
          </svg>
          <svg width="13" height="16" viewBox="0 0 13 16">
            <rect x="3.500" y="0" width="6" height="10" rx="3" fill="currentColor" />
            <path d="M1 7q1 5 5.500 5T12 7M4 15h5" fill="none" stroke="currentColor" strokeWidth="1.600" />
          </svg>
          <svg width="15" height="12" viewBox="0 0 15 12" fill="none" stroke="currentColor">
            <rect x="1" y="1" width="13" height="10" rx="1" strokeWidth="1.500" />
            <path d="M3 4h9M3 6.500h9" strokeWidth="1.300" strokeDasharray="2 1" />
            <path d="M4 9h7" strokeWidth="1.300" />
          </svg>
          <svg width="13" height="13" viewBox="0 0 13 13" fill="currentColor">
            <rect width="6" height="6" rx="2" />
            <rect y="7" width="6" height="6" rx="2" />
            <rect x="7" y="7" width="6" height="6" rx="2" />
            <circle cx="10" cy="3" r="2" fill="none" stroke="currentColor" strokeWidth="1.500" />
          </svg>
        </div>
      </div>

      {/* site badge */}
      <div className="absolute right-[11px] bottom-[7px] flex items-center gap-px pointer-events-none">
        <svg width="43" height="42" viewBox="0 0 43 42">
          <defs>
            <linearGradient id="swirlTop" x1="0" y1="1" x2="1" y2="0">
              <stop offset="0" stopColor="#4a78c0" />
              <stop offset="1" stopColor="#6cc8ee" />
            </linearGradient>
            <linearGradient id="swirlLow" x1="0" y1="1" x2="1" y2="0">
              <stop offset="0" stopColor="#e6e04c" />
              <stop offset="1" stopColor="#57c08c" />
            </linearGradient>
          </defs>
          <path d="M43 1C22 0 2 10 1 24c0 6 4 10 8 11-5-10 5-27 34-34z" fill="url(#swirlTop)" />
          <path d="M25 17c8-5 17-2 17 5 0 11-18 19-38 18 16-1 28-9 29-17 0-4-3-6-8-6z" fill="url(#swirlLow)" />
          <path d="M11 33c-3-8 5-17 13-16 8 1 7 10-3 11 4-3 4-7 0-7-5 0-9 6-10 12z" fill="#4f93d4" />
        </svg>
        <div className="flex flex-col whitespace-nowrap">
          <span className="text-[21px] leading-[24px] font-bold text-[#5b9fd8]">极光下载站</span>
          <span className="text-[16px] leading-[20px] font-bold font-['Liberation_Sans',sans-serif] text-[#55bd7c]">
            www.xz7.com
          </span>
        </div>
      </div>
    </>
  );
}

export default function App() {
  return (
    <div className="relative flex flex-col w-full h-screen overflow-hidden bg-[#d8d8d8] font-['Liberation_Sans','Noto_Sans_CJK_SC',sans-serif] text-[#222]">
      <TitleBar />
      <MenuBar />
      <Toolbar />
      <FormatBar />
      <div className="flex flex-1 min-h-0 border-t border-[#b0b0b0]">
        <aside className="flex flex-col w-[267px] shrink-0">
          <PagesPanel />
          <LibraryPanel />
          <section className="flex flex-col flex-1 border-t-2 border-[#b8b8b8] bg-white">
            <PanelHeader title="母版">
              <AddPageIcon />
              <AddFolderIcon />
              <SearchIcon />
            </PanelHeader>
          </section>
        </aside>
        <Canvas />
        <aside className="flex flex-col w-[267px] shrink-0">
          <Inspector />
          <Outline />
        </aside>
      </div>
      <Overlays />
    </div>
  );
}
